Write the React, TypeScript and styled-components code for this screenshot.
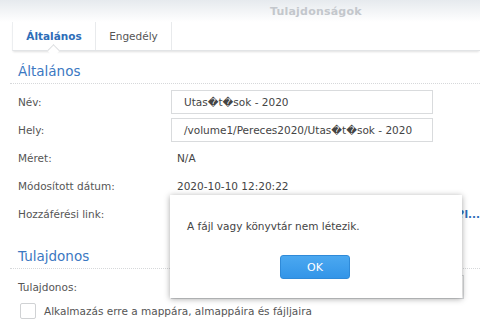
import styled, { createGlobalStyle } from "styled-components";

const GlobalStyle = createGlobalStyle`
  html, body {
    margin: 0;
    padding: 0;
    background: #fff;
  }
  body {
    font-family: "DejaVu Sans", Verdana, sans-serif;
    font-size: 10.5px;
    color: #555;
    width: 480px;
    height: 335px;
    overflow: hidden;
  }
`;

const Window = styled.div`
  position: relative;
  width: 480px;
  height: 335px;
  overflow: hidden;
  background: #fff;
`;

const Header = styled.div`
  height: 22px;
  background: linear-gradient(#e6eaee, #ffffff);
  display: flex;
  align-items: center;
  padding-left: 270px;
  font-weight: bold;
  font-size: 11px;
  color: #c3c7cc;
  letter-spacing: 0.2px;
`;

const TabBar = styled.div`
  margin-left: 12px;
  height: 28px;
  display: flex;
  border-left: 1px solid #eceef0;
  box-shadow: 0 2px 2px -1px rgba(0, 0, 0, 0.12);
  border-bottom: 1px solid #e2e4e6;
`;

const Tab = styled.div<{ $active?: boolean; $width: number }>`
  position: relative;
  width: ${(p) => p.$width}px;
  display: flex;
  align-items: center;
  justify-content: center;
  border-right: 1px solid #e8eaec;
  font-size: 10.5px;
  font-weight: ${(p) => (p.$active ? "bold" : "normal")};
  color: ${(p) => (p.$active ? "#2d6db8" : "#555")};
  &::after {
    content: "";
    display: ${(p) => (p.$active ? "block" : "none")};
    position: absolute;
    left: 36px;
    bottom: -5px;
    width: 8px;
    height: 8px;
    background: #fff;
    border-left: 1px solid #dcdee0;
    border-top: 1px solid #dcdee0;
    transform: rotate(45deg);
  }
`;

const Body = styled.div`
  padding: 0 0 0 10px;
`;

const SectionTitle = styled.div<{ $gap?: number }>`
  font-size: 13.5px;
  color: #3b78c2;
  margin-top: ${(p) => p.$gap ?? 0}px;
  padding: 10px 0 0 8px;
  height: 22px;
  line-height: 20px;
  border-bottom: 1px dotted #d6d8da;
`;

const Spacer = styled.div<{ $h: number }>`
  height: ${(p) => p.$h}px;
`;

const Row = styled.div`
  display: flex;
  align-items: center;
  height: 28px;
  padding-left: 8px;
`;

const Label = styled.div`
  width: 153px;
  flex-shrink: 0;
  color: #555;
`;

const Input = styled.div<{ $width: number }>`
  width: ${(p) => p.$width}px;
  height: 24px;
  box-sizing: border-box;
  border: 1px solid #d9dbdd;
  padding-left: 12px;
  display: flex;
  align-items: center;
  color: #444;
  white-space: nowrap;
  overflow: hidden;
`;

const Value = styled.div`
  padding-left: 6px;
  color: #444;
`;

const LinkValue = styled.div`
  flex: 1;
  text-align: right;
  font-weight: bold;
  color: #2d6db8;
  white-space: nowrap;
  overflow: hidden;
`;

const CheckRow = styled.div`
  display: flex;
  align-items: center;
  gap: 8px;
  padding: 0 0 0 10px;
  height: 20px;
`;

const Checkbox = styled.div`
  width: 16px;
  height: 16px;
  box-sizing: border-box;
  border: 1px solid #d0d2d4;
  border-radius: 2px;
  background: #fff;
`;

const Dialog = styled.div`
  position: absolute;
  left: 170px;
  top: 195px;
  width: 292px;
  height: 103px;
  background: #fff;
  box-shadow: 0 1px 6px rgba(0, 0, 0, 0.35);
  display: flex;
  flex-direction: column;
  align-items: flex-start;
  box-sizing: border-box;
  padding: 24px 0 0 17px;
`;

const Message = styled.div`
  color: #444;
  height: 14px;
  line-height: 14px;
`;

const OkButton = styled.button`
  margin: 22px 0 0 93px;
  width: 70px;
  height: 24px;
  border: 1px solid #2f8ad8;
  border-radius: 3px;
  background: linear-gradient(#4ba8f0, #3395e8);
  color: #fff;
  font-family: inherit;
  font-size: 11px;
  padding: 0;
`;

export default function App() {
  return (
    <Window>
      <GlobalStyle />
      <Header>Tulajdonságok</Header>
      <TabBar>
        <Tab $active $width={82}>
          Általános
        </Tab>
        <Tab $width={75}>Engedély</Tab>
      </TabBar>
      <Body>
        <SectionTitle>Általános</SectionTitle>
        <Spacer $h={4} />
        <Row>
          <Label>Név:</Label>
          <Input $width={262}>Utas�t�sok - 2020</Input>
        </Row>
        <Row>
          <Label>Hely:</Label>
          <Input $width={262}>/volume1/Pereces2020/Utas�t�sok - 2020</Input>
        </Row>
        <Row>
          <Label>Méret:</Label>
          <Value>N/A</Value>
        </Row>
        <Row>
          <Label>Módosított dátum:</Label>
          <Value>2020-10-10 12:20:22</Value>
        </Row>
        <Row>
          <Label>Hozzáférési link:</Label>
          <LinkValue>http://gofile.me/6Jx1N/Utasitasok?l...</LinkValue>
        </Row>
        <SectionTitle $gap={8}>Tulajdonos</SectionTitle>
        <Spacer $h={4} />
        <Row>
          <Label>Tulajdonos:</Label>
          <Input $width={293}>admin</Input>
        </Row>
        <CheckRow>
          <Checkbox />
          <span>Alkalmazás erre a mappára, almappáira és fájljaira</span>
        </CheckRow>
      </Body>
      <Dialog>
        <Message>A fájl vagy könyvtár nem létezik.</Message>
        <OkButton>OK</OkButton>
      </Dialog>
    </Window>
  );
}
